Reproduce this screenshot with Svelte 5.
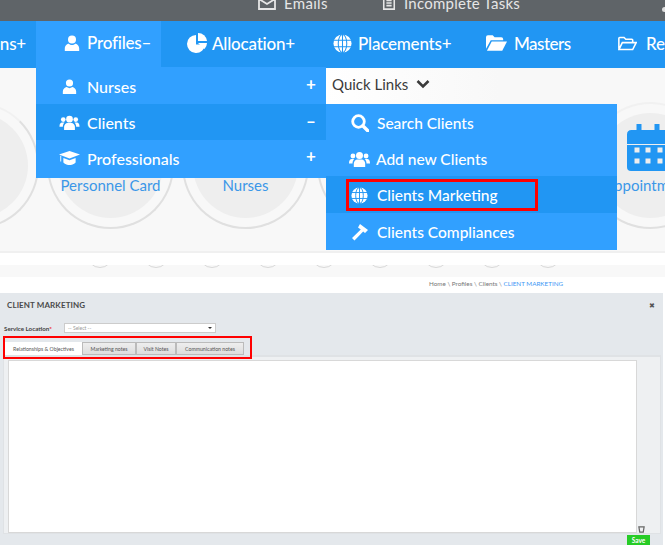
<script>
  const circles = [
    { label: '', icon: false },
    { label: 'Personnel Card', icon: false },
    { label: 'Nurses', icon: false },
    { label: '', icon: false },
    { label: '', icon: false },
    { label: 'Appointments', icon: true }
  ];
  const arcs = [1, 2, 3, 4, 5, 6, 7, 8, 9];
</script>

{#snippet user()}
  <svg class="ic" viewBox="0 0 20 20"><circle cx="10" cy="5.5" r="5"/><path d="M1 20v-3c0-4 3-6 5-6 1 1 2.500 1.500 4 1.500s3-.5 4-1.500c2 0 5 2 5 6v3z"/></svg>
{/snippet}
{#snippet users()}
  <svg class="ic" viewBox="0 0 24 18"><circle cx="12" cy="5" r="4"/><circle cx="4.500" cy="5.500" r="2.800"/><circle cx="19.500" cy="5.500" r="2.800"/><path d="M5.500 18v-3.500c0-3 2-5 4-5h5c2 0 4 2 4 5V18z"/><path d="M0 13.500c0-3 1.500-4.500 3-4.500h3c-1 1-2 3-2 5H0zM24 13.500c0-3-1.500-4.500-3-4.500h-3c1 1 2 3 2 5h4z"/></svg>
{/snippet}
{#snippet globe()}
  <svg class="ic" viewBox="0 0 20 20"><circle cx="10" cy="10" r="9.500"/><g fill="none" stroke="var(--line)" stroke-width="1.100"><ellipse cx="10" cy="10" rx="4.500" ry="9.500"/><path d="M10 0v20M1 6.500h18M1 13.500h18"/></g></svg>
{/snippet}

<div class="page">
  <header class="topbar">
    <span class="top-item emails">
      <svg viewBox="0 0 18 14" class="top-ic"><path d="M1 1h16v12H1zM1 3l8 5 8-5" fill="none" stroke="#e6e6e6" stroke-width="1.800"/></svg>
      Emails
    </span>
    <span class="top-item tasks">
      <svg viewBox="0 0 14 16" class="top-ic small"><path d="M1 1h12v14H1zM4 5h6M4 8h6M4 11h6" fill="none" stroke="#e6e6e6" stroke-width="1.800"/></svg>
      Incomplete Tasks
    </span>
    <i class="top-user"></i>
  </header>

  <nav class="nav">
    <span class="nav-item cut">ns+</span>
    <span class="nav-item active">{@render user()}Profiles–</span>
    <span class="nav-item alloc">
      <svg class="ic big" viewBox="0 0 20 20"><path d="M9 2a9 9 0 1 0 9 9.500H9z"/><path d="M11 0a9 9 0 0 1 9 8h-9z"/><path d="M11 10h9a9 9 0 0 1-2.500 6z"/></svg>
      Allocation+
    </span>
    <span class="nav-item place">{@render globe()}Placements+</span>
    <span class="nav-item masters">
      <svg class="ic big" viewBox="0 0 22 16"><path d="M0 14V2q0-2 2-2h5l2 2h7q2 0 2 2v1H5L0 14z"/><path d="M1 16l5-9.500h16L17 16z"/></svg>
      Masters
    </span>
    <span class="nav-item re">
      <svg class="ic outline" viewBox="0 0 22 16"><path d="M1 14V2q0-1 1-1h5l2 2h7q1 0 1 1v2.500M1 15l4-8h16l-4 8z" fill="none" stroke="#fff" stroke-width="1.800"/></svg>
      Re
    </span>
  </nav>

  <section class="hero">
    <div class="circles">
      {#each circles as c}
        <div class="circle">
          <div class="inner">
            {#if c.icon}
              <svg class="cal" viewBox="0 0 43 47"><path d="M9.500 0h5v6h13V0h5v6h6q4.500 0 4.500 4.500V20H0v-9.500Q0 6 4.500 6h5z"/><path d="M0 21h43v22q0 4-4 4H4q-4 0-4-4z"/><g fill="#eee"><rect x="7.500" y="23.500" width="5" height="5"/><rect x="18.500" y="23.500" width="5" height="5"/><rect x="30.500" y="23.500" width="5" height="5"/><rect x="7.500" y="34.500" width="5" height="5"/><rect x="18.500" y="34.500" width="5" height="5"/><rect x="30.500" y="34.500" width="5" height="5"/></g></svg>
            {/if}
            <span class="circle-label">{c.label}</span>
          </div>
        </div>
      {/each}
    </div>

    <div class="menu">
      <div class="row">
        <svg class="ic m" viewBox="0 0 18 18"><circle cx="9" cy="4.800" r="4.300"/><path d="M1 18v-3c0-3 2.500-5 4.500-5.500L9 11l3.500-1.500c2 .5 4.500 2.500 4.500 5.500v3z"/></svg>
        <span class="label">Nurses</span><b class="sign">+</b>
      </div>
      <div class="row dark">
        {@render users()}
        <span class="label">Clients</span><b class="sign">–</b>
      </div>
      <div class="row">
        <svg class="ic m wide" viewBox="0 0 24 16"><path d="M12 0l12 4-12 4.500L0 4z"/><path d="M5 8l7 2.500L19 8v5c-2 2-5 3-7 3s-5-1-7-3zM1.500 5.500h1V12h-1z"/></svg>
        <span class="label">Professionals</span><b class="sign">+</b>
      </div>
    </div>

    <div class="quick">
      <div class="quick-head">
        Quick Links
        <svg class="chev" viewBox="0 0 14 10"><path d="M1.500 2l5.500 5.500L12.500 2" fill="none" stroke="#3b3b3b" stroke-width="2.600"/></svg>
      </div>
      <div class="sub">
        <div class="sub-row">
          <svg class="ic s" viewBox="0 0 18 18"><circle cx="7.500" cy="7.500" r="5.800" fill="none" stroke="#fff" stroke-width="2.800"/><path d="M12 12l5 5" stroke="#fff" stroke-width="3.400" stroke-linecap="round"/></svg>
          <span>Search Clients</span>
        </div>
        <div class="sub-row tight">{@render users()}<span>Add new Clients</span></div>
        <div class="sub-row dark">
          <span class="mark">{@render globe()}<span>Clients Marketing</span></span>
        </div>
        <div class="sub-row">
          <svg class="ic s" viewBox="0 0 18 18"><path d="M9 1l8 6-3 3-1.800-1.400L3.500 17.500 1 15l8.800-8.500L7 4.500z"/></svg>
          <span>Clients Compliances</span>
        </div>
      </div>
    </div>
  </section>

  <div class="gap-strip"></div>
  <div class="arc-strip">
    {#each arcs as a}<i class="arc" data-a={a}></i>{/each}
  </div>
  <div class="crumbs">Home \ Profiles \ Clients \ <span>CLIENT MARKETING</span></div>

  <main class="panel">
    <div class="panel-head">
      <h1>CLIENT MARKETING</h1>
      <span class="close">✖</span>
    </div>
    <div class="field">
      <label for="loc">Service Location<em>*</em></label>
      <div id="loc" class="select"><span>-- Select --</span><i></i></div>
    </div>
    <div class="tabs">
      <span class="tab on">Relationships &amp; Objectives</span>
      <span class="tab t2">Marketing notes</span>
      <span class="tab t3">Visit Notes</span>
      <span class="tab t4">Communication notes</span>
    </div>
    <div class="tab-body">
      <div class="editor"></div>
      <svg class="grip" viewBox="0 0 8 8"><path d="M1 1h6L6 7H2z" fill="none" stroke="#666" stroke-width="1.400"/></svg>
    </div>
    <div class="actions"><span class="save">Save</span></div>
    <div class="highlight"></div>
  </main>
</div>

<style>
  :global(body) { margin: 0; background: #fff; }
  .page {
    width: 665px; height: 545px; overflow: hidden; position: relative;
    font-family: Lato, "Noto Sans", sans-serif; color: #fff; background: #fff;
  }
  .topbar { height: 21px; background: #5f6468; display: flex; overflow: hidden; }
  .top-item { display: flex; align-items: center; gap: 8px; height: 12px; margin-top: -3px; font-size: 15px; color: #e6e6e6; letter-spacing: .3px; flex: none; }
  .emails { margin-left: 258px; width: 124px; }
  .tasks { width: 280px; letter-spacing: .25px; }
  .top-user { width: 5px; height: 5px; margin: 7px 0 0 0; border-radius: 50%; background: #ddd; flex: none; }
  .top-ic { width: 18px; height: 14px; flex: none; }
  .top-ic.small { width: 14px; }
  .nav { height: 47px; background: #2196f3; display: flex; align-items: stretch; font-size: 17px; font-weight: 500; letter-spacing: -.2px; }
  .nav-item { display: flex; align-items: center; white-space: nowrap; box-sizing: border-box; flex: none; padding-bottom: 3px; }
  .cut { width: 36px; justify-content: flex-end; padding-right: 10px; overflow: hidden; }
  .active { width: 125px; background: #31a0ff; padding-left: 28px; gap: 7px; height: 46px; }
  .alloc { width: 146px; padding-left: 26px; gap: 5px; }
  .place { width: 153px; padding-left: 26px; gap: 6px; }
  .masters { width: 158px; padding-left: 26px; gap: 7px; letter-spacing: -.5px; }
  .re { width: 47px; gap: 9px; }
  .ic { width: 16px; height: 20px; fill: #fff; flex: none; --line: #2196f3; }
  .ic.big { width: 20px; }
  .place .ic { width: 19px; height: 19px; }
  .masters .ic { width: 21px; height: 16px; }
  .re .ic { width: 19px; height: 15px; }

  .hero { height: 183px; background: #f8f8f8; position: relative; border-bottom: 2px solid #f0f0f0; }
  .circles { display: flex; gap: 8px; margin-left: -88px; padding-top: 34px; }
  .circle {
    width: 127px; height: 127px; flex: none; border-radius: 50%; box-sizing: border-box;
    background: #f8f8f8; border: 2px solid #e0e0e0; border-top-color: #f1f1f1; display: flex; align-items: center; justify-content: center;
  }
  .inner { width: 105px; height: 105px; border-radius: 50%; background: #eee; display: flex; flex-direction: column; align-items: center; justify-content: flex-end; position: relative; }
  .circle-label { color: #3b97e8; font-size: 15px; white-space: nowrap; padding-bottom: 24px; }
  .cal { width: 43px; height: 47px; fill: #2196f3; position: absolute; top: 11px; left: 29px; }

  .menu { position: absolute; left: 36px; top: -1px; width: 290px; background: #31a0ff; font-size: 16px; font-weight: 500; }
  .row { height: 36px; display: flex; align-items: center; position: relative; }
  .row:first-child { height: 37px; padding-top: 1px; box-sizing: border-box; }
  .row:nth-child(2) { padding-top: 1px; box-sizing: border-box; }
  .row:last-child { height: 38px; padding-bottom: 2px; box-sizing: border-box; }
  .row.dark { background: #2196f3; }
  .row .ic { width: 21px; height: 15px; margin-left: 23px; }
  .row .ic.m { width: 15px; height: 17px; margin-left: 26px; }
  .row .ic.wide { width: 21px; height: 14px; margin-left: 23px; }
  .label { margin-left: 7px; flex: 1; }
  .row:first-child .label { margin-left: 10px; }
  .sign { width: 20px; font-size: 17px; text-align: left; margin-top: -5px; }

  .quick { position: absolute; left: 326px; top: 0; width: 291px; }
  .quick-head { height: 36px; display: flex; align-items: center; gap: 8px; padding: 0 0 4px 6px; box-sizing: border-box; color: #3b3b3b; font-size: 15px; background: linear-gradient(90deg, #fff, #f8f8f8 60%); }
  .chev { width: 14px; height: 10px; }
  .sub { background: #31a0ff; font-size: 15.500px; font-weight: 500; }
  .sub-row { height: 36px; display: flex; align-items: center; gap: 8px; padding: 1px 0 0 25px; box-sizing: border-box; white-space: nowrap; }
  .sub-row:nth-child(3), .sub-row:nth-child(4) { height: 37px; }
  .sub-row .ic { width: 18px; height: 18px; }
  .sub-row.tight { padding-left: 23px; gap: 6px; }
  .sub-row.tight .ic { width: 21px; height: 16px; }
  .sub-row.dark { background: #2196f3; padding-left: 20px; }
  .mark { display: flex; align-items: center; gap: 9px; width: 192px; height: 32px; box-sizing: border-box; border: 3px solid #f00; padding-left: 2px; }
  .mark .ic { width: 17px; height: 17px; }

  .gap-strip { height: 12px; background: #fff; }
  .arc-strip { height: 12px; background: #f8f8f8; display: flex; gap: 30px; padding-left: 87px; overflow: hidden; }
  .arc { flex: none; width: 26px; height: 26px; margin-top: -23px; border-radius: 50%; border: 1px solid #d8d8d8; box-sizing: border-box; }
  .crumbs { height: 16px; background: #fff; padding-left: 429px; font-size: 6.300px; line-height: 14px; color: #777; white-space: nowrap; }
  .crumbs span { color: #3d96f5; }

  .panel { background: #e4e8ec; width: 663px; height: 253px; color: #444; position: relative; }
  .panel-head { display: flex; justify-content: space-between; align-items: center; height: 24px; padding: 0 8px 0 7px; }
  h1 { margin: 0; font-size: 8px; font-weight: 700; color: #4a4a4a; letter-spacing: .1px; }
  .close { font-size: 7px; color: #555; }
  .field { display: flex; align-items: center; height: 10px; margin-top: 6px; padding-left: 4px; }
  label { width: 60px; font-size: 6.200px; font-weight: 700; color: #444; white-space: nowrap; }
  em { color: #e33; font-style: normal; }
  .select { width: 152px; height: 10px; box-sizing: border-box; background: #fff; border: 1px solid #ccc; display: flex; align-items: center; justify-content: space-between; padding: 0 3px; font-size: 5px; color: #999; }
  .select i { border: 2px solid transparent; border-top: 2.500px solid #333; border-bottom: 0; }
  .tabs { display: flex; height: 13px; margin: 9px 0 0 5px; font-size: 5.200px; }
  .tab { box-sizing: border-box; display: flex; align-items: center; justify-content: center; white-space: nowrap; background: linear-gradient(#eee, #ddd); border: 1px solid #bbb; color: #555; }
  .tab.on { width: 77px; background: #fff; border-color: #fff; }
  .t2 { width: 54px; } .t3 { width: 40px; } .t4 { width: 68px; }
  .tab-body { margin-left: 3px; width: 658px; height: 179px; background: #eef0f2; box-sizing: border-box; border: 1px solid #dfe2e5; border-top-width: 2px; padding: 3px 0 0 4px; position: relative; }
  .editor { width: 629px; height: 173px; background: #fff; border: 1px solid #d8d8d8; box-sizing: border-box; }
  .grip { position: absolute; left: 634px; top: 169px; width: 7px; height: 7px; }
  .actions { display: flex; justify-content: flex-end; padding: 1px 13px 0 0; }
  .save { width: 23px; height: 11px; background: #26cc26; color: #fff; font-size: 6.500px; font-weight: 700; text-align: center; line-height: 11px; }
  .highlight { position: absolute; left: 3px; top: 43px; width: 249px; height: 23px; box-sizing: border-box; border: 2px solid #f00; pointer-events: none; }
</style>
